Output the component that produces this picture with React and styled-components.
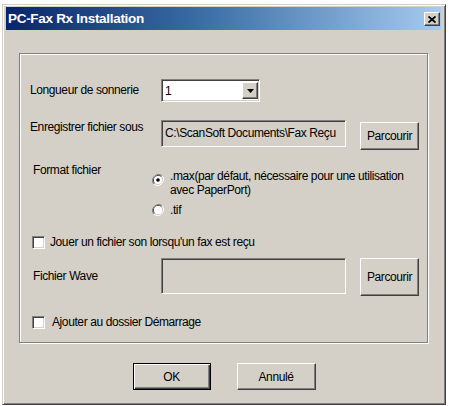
import React from 'react';
import styled, { createGlobalStyle } from 'styled-components';

const GlobalStyle = createGlobalStyle`
  body {
    margin: 0;
    background: #ffffff;
    font-family: "Liberation Sans", Arial, sans-serif;
    font-size: 12px;
    letter-spacing: -0.4px;
    color: #000;
  }
`;

const Window = styled.div`
  margin: 4px 0 0 2px;
  width: 444px;
  height: 401px;
  box-sizing: border-box;
  background: #d4d0c8;
  border: 1px solid;
  border-color: #d4d0c8 #404040 #404040 #d4d0c8;
  box-shadow: inset 1px 1px #ffffff, inset -1px -1px #808080;
  padding: 2px 4px 0 3px;
  display: flex;
  flex-direction: column;
`;

const TitleBar = styled.div`
  height: 23px;
  display: flex;
  align-items: center;
  justify-content: space-between;
  padding: 0 1px 0 2px;
  background: linear-gradient(to right, #0a246a 0%, #3a6ea5 45%, #a6caf0 100%);
`;

const Title = styled.span`
  color: #ffffff;
  font-weight: bold;
  font-size: 13.5px;
  letter-spacing: -0.3px;
`;

const RaisedBox = styled.div`
  box-sizing: border-box;
  background: #d4d0c8;
  border: 1px solid;
  border-color: #ffffff #404040 #404040 #ffffff;
  box-shadow: inset -1px -1px #808080;
  display: flex;
  align-items: center;
  justify-content: center;
`;

const CloseButton = styled(RaisedBox)`
  width: 16px;
  height: 14px;
  margin-top: 1px;
`;

const GroupBox = styled.div`
  margin: 23px 0 0 13px;
  width: 409px;
  height: 290px;
  box-sizing: border-box;
  border: 1px solid #808080;
  box-shadow: 1px 1px 0 #ffffff, inset 1px 1px 0 #ffffff;
  display: flex;
  flex-direction: column;
`;

const Row = styled.div`
  display: flex;
  align-items: ${p => p.$align || 'flex-start'};
  margin-top: ${p => p.$top}px;
  padding-left: ${p => p.$indent}px;
`;

const Label = styled.span`
  width: ${p => p.$w}px;
  line-height: 15px;
  flex-shrink: 0;
  white-space: nowrap;
`;

const Sunken = styled.div`
  box-sizing: border-box;
  border: 1px solid;
  border-color: #808080 #ffffff #ffffff #808080;
  box-shadow: inset 1px 1px #404040, inset -1px -1px #d4d0c8;
`;

const Combo = styled(Sunken)`
  width: 99px;
  height: 23px;
  background: #ffffff;
  display: flex;
  align-items: center;
  padding: 2px 1px 2px 3px;
`;

const ComboValue = styled.span`
  flex: 1;
`;

const DropButton = styled(RaisedBox)`
  width: 16px;
  height: 100%;
`;

const Field = styled(Sunken)`
  width: 185px;
  height: ${p => p.$h}px;
  background: #d4d0c8;
  padding: 5px 3px;
  white-space: nowrap;
  overflow: hidden;
  line-height: 15px;
`;

const Button = styled(RaisedBox)`
  width: ${p => p.$w}px;
  height: ${p => p.$h}px;
  margin-left: ${p => p.$ml || 0}px;
  margin-top: ${p => p.$mt || 0}px;
  ${p => p.$default && `
    border-color: #000000;
    box-shadow: inset 1px 1px #ffffff, inset -1px -1px #404040, inset -2px -2px #808080;
  `}
`;

const Options = styled.div`
  display: flex;
  flex-direction: column;
  gap: 6px;
  margin-top: 6px;
`;

const Option = styled.div`
  display: flex;
  align-items: flex-start;
  gap: 6px;
  line-height: 14px;
  white-space: nowrap;
`;

const RadioMark = styled.svg`
  flex-shrink: 0;
  margin-top: ${p => p.$mt}px;
`;

const CheckBox = styled(Sunken)`
  width: 13px;
  height: 13px;
  background: #ffffff;
  flex-shrink: 0;
`;

const CheckLabel = styled.span`
  margin-left: ${p => p.$gap}px;
  line-height: 15px;
  white-space: nowrap;
`;

const Footer = styled.div`
  display: flex;
  justify-content: center;
  gap: 26px;
  margin-top: 20px;
  padding-left: 1px;
`;

function Radio({ checked, mt }) {
  return (
    <RadioMark $mt={mt} width="12" height="12" viewBox="0 0 12 12">
      <path d="M10.2 1.8 A6 6 0 0 0 1.8 10.2" fill="none" stroke="#808080" strokeWidth="1" />
      <path d="M1.8 10.2 A6 6 0 0 0 10.2 1.8" fill="none" stroke="#ffffff" strokeWidth="1" />
      <path d="M9.5 2.5 A5 5 0 0 0 2.5 9.5" fill="none" stroke="#404040" strokeWidth="1" />
      <path d="M2.5 9.5 A5 5 0 0 0 9.5 2.5" fill="none" stroke="#d4d0c8" strokeWidth="1" />
      <circle cx="6" cy="6" r="4" fill="#ffffff" />
      {checked && <circle cx="6" cy="6" r="1.8" fill="#000000" />}
    </RadioMark>
  );
}

function App() {
  return (
    <>
      <GlobalStyle />
      <Window>
        <TitleBar>
          <Title>PC-Fax Rx Installation</Title>
          <CloseButton>
            <svg width="8" height="7" viewBox="0 0 8 7">
              <path d="M0.5 0.5 L7.5 6.5 M7.5 0.5 L0.5 6.5" stroke="#000" strokeWidth="1.8" />
            </svg>
          </CloseButton>
        </TitleBar>

        <GroupBox>
          <Row $top={25} $indent={10} $align="center">
            <Label $w={131}>Longueur de sonnerie</Label>
            <Combo>
              <ComboValue>1</ComboValue>
              <DropButton>
                <svg width="7" height="4" viewBox="0 0 7 4">
                  <path d="M0 0 H7 L3.5 4 Z" fill="#000" />
                </svg>
              </DropButton>
            </Combo>
          </Row>

          <Row $top={18} $indent={10}>
            <Label $w={131}>Enregistrer fichier sous</Label>
            <Field $h={27}>C:\ScanSoft Documents\Fax Reçu</Field>
            <Button $w={59} $h={28} $ml={14} $mt={2}>Parcourir</Button>
          </Row>

          <Row $top={13} $indent={13}>
            <Label $w={119}>Format fichier</Label>
            <Options>
              <Option>
                <Radio checked mt={5} />
                <span>.max(par défaut, nécessaire pour une utilisation<br />avec PaperPort)</span>
              </Option>
              <Option>
                <Radio mt={1} />
                <span>.tif</span>
              </Option>
            </Options>
          </Row>

          <Row $top={18} $indent={12} $align="center">
            <CheckBox />
            <CheckLabel $gap={5}>Jouer un fichier son lorsqu'un fax est reçu</CheckLabel>
          </Row>

          <Row $top={6} $indent={13} $align="center">
            <Label $w={128}>Fichier Wave</Label>
            <Field $h={36} />
            <Button $w={59} $h={38} $ml={14} $mt={2}>Parcourir</Button>
          </Row>

          <Row $top={19} $indent={12} $align="center">
            <CheckBox />
            <CheckLabel $gap={7}>Ajouter au dossier Démarrage</CheckLabel>
          </Row>
        </GroupBox>

        <Footer>
          <Button $w={78} $h={27} $default>OK</Button>
          <Button $w={79} $h={27}>Annulé</Button>
        </Footer>
      </Window>
    </>
  );
}

export default App;
